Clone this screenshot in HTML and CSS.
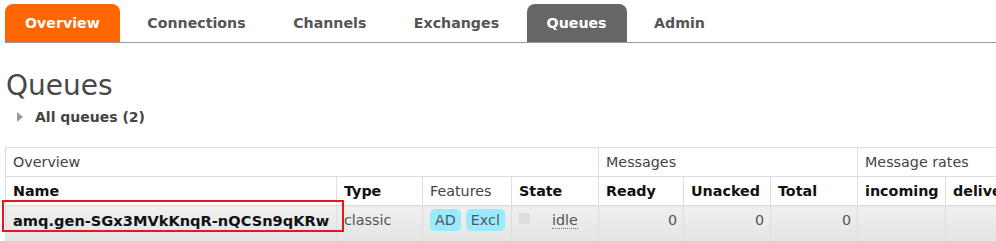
FILE: index.html
```html
<!DOCTYPE html>
<html>
<head>
<meta charset="utf-8">
<link rel="stylesheet" href="styles.css">
</head>
<body>
<div class="page">
  <ul class="tabs">
    <li class="tab tab-overview">Overview</li>
    <li class="tab">Connections</li>
    <li class="tab">Channels</li>
    <li class="tab">Exchanges</li>
    <li class="tab tab-active">Queues</li>
    <li class="tab">Admin</li>
  </ul>

  <h1 class="title">Queues</h1>
  <div class="section-toggle"><span class="triangle"></span><span class="section-label">All queues (2)</span></div>

  <table class="list">
    <colgroup>
      <col class="c-name"><col class="c-type"><col class="c-feat"><col class="c-state">
      <col class="c-ready"><col class="c-num"><col class="c-num"><col class="c-inc"><col class="c-del">
    </colgroup>
    <thead>
      <tr class="group-row">
        <th colspan="4" class="group">Overview</th>
        <th colspan="3" class="group">Messages</th>
        <th colspan="2" class="group">Message rates</th>
      </tr>
      <tr class="head-row">
        <th>Name</th>
        <th>Type</th>
        <th class="plain">Features</th>
        <th>State</th>
        <th>Ready</th>
        <th>Unacked</th>
        <th>Total</th>
        <th>incoming</th>
        <th class="clip">deliver / get</th>
      </tr>
    </thead>
    <tbody>
      <tr class="data-row">
        <td class="name-cell"><span class="name">amq.gen-SGx3MVkKnqR-nQCSn9qKRw</span><span class="highlight"></span></td>
        <td class="muted">classic</td>
        <td><span class="badge">AD</span><span class="badge">Excl</span></td>
        <td><span class="state-box"></span><abbr class="state">idle</abbr></td>
        <td class="num">0</td>
        <td class="num">0</td>
        <td class="num">0</td>
        <td></td>
        <td></td>
      </tr>
    </tbody>
  </table>
</div>
</body>
</html>
```

FILE: styles.css
```css
* { box-sizing: border-box; }
html, body { margin: 0; padding: 0; background: #fff; }
body {
  font-family: "DejaVu Sans", Verdana, sans-serif;
  color: #484848;
  overflow: hidden;
}
.page { padding-left: 5px; }

.tabs {
  list-style: none;
  margin: 4px 0 0 0;
  padding: 0;
  display: flex;
  border-bottom: 1px solid #999;
  width: 1100px;
}
.tab {
  height: 38px;
  line-height: 38px;
  padding: 0 20px;
  margin-right: 7.5px;
  font-weight: bold;
  font-size: 14.2px;
  color: #555;
  border-radius: 8px 8px 0 0;
}
.tab-overview { background: #f60; color: #fff; }
.tab-active { background: #666; color: #fff; }

.title {
  margin: 26px 0 0 1px;
  font-size: 28px;
  font-weight: normal;
  line-height: 34px;
  color: #484848;
}
.section-toggle {
  display: flex;
  align-items: center;
  margin: 4px 0 0 12px;
  height: 20px;
}
.triangle {
  width: 0; height: 0;
  border-top: 5px solid transparent;
  border-bottom: 5px solid transparent;
  border-left: 6px solid #999;
  margin-right: 12px;
}
.section-label { font-weight: bold; font-size: 14px; color: #444; }

.list {
  margin-top: 20px;
  border-collapse: collapse;
  table-layout: fixed;
  width: 1030px;
  font-size: 14.3px;
}
.c-name { width: 331px; }
.c-type { width: 86px; }
.c-feat { width: 89px; }
.c-state { width: 87px; }
.c-ready { width: 85px; }
.c-num { width: 87px; }
.c-inc { width: 88px; }
.c-del { width: 90px; }

.list th, .list td {
  border: 1px solid #ddd;
  padding: 0 6px 0 7px;
  text-align: left;
  white-space: nowrap;
  overflow: visible;
}
.list th.clip { overflow: hidden; }
.group-row th {
  height: 29px;
  font-weight: normal;
  color: #444;
}
.head-row th {
  height: 29px;
  font-weight: bold;
  color: #111;
}
.head-row th.plain { font-weight: normal; color: #444; }

.data-row td {
  height: 36px;
  vertical-align: top;
  padding-top: 6px;
  background: linear-gradient(#f0f0f0, #e4e4e4);
  color: #555;
}
.name-cell { position: relative; }
.name { font-weight: bold; color: #111; font-size: 14.6px; }
.highlight {
  position: absolute;
  left: -4px;
  top: -6px;
  width: 342px;
  height: 32px;
  border: 2px solid #e8161b;
}
.muted { color: #555; }
.badge {
  display: inline-block;
  background: #99ebff;
  border-radius: 5px;
  padding: 0 5px;
  height: 22px;
  line-height: 22px;
  margin-top: -3px;
  margin-right: 5px;
  color: #555;
}
.state-box {
  display: inline-block;
  width: 11px;
  height: 11px;
  background: #ddd;
  margin: 1px 22px 0 0;
  vertical-align: top;
}
.state {
  text-decoration: none;
  border-bottom: 1px dotted #777;
  color: #555;
}
.num { text-align: right !important; }
```
